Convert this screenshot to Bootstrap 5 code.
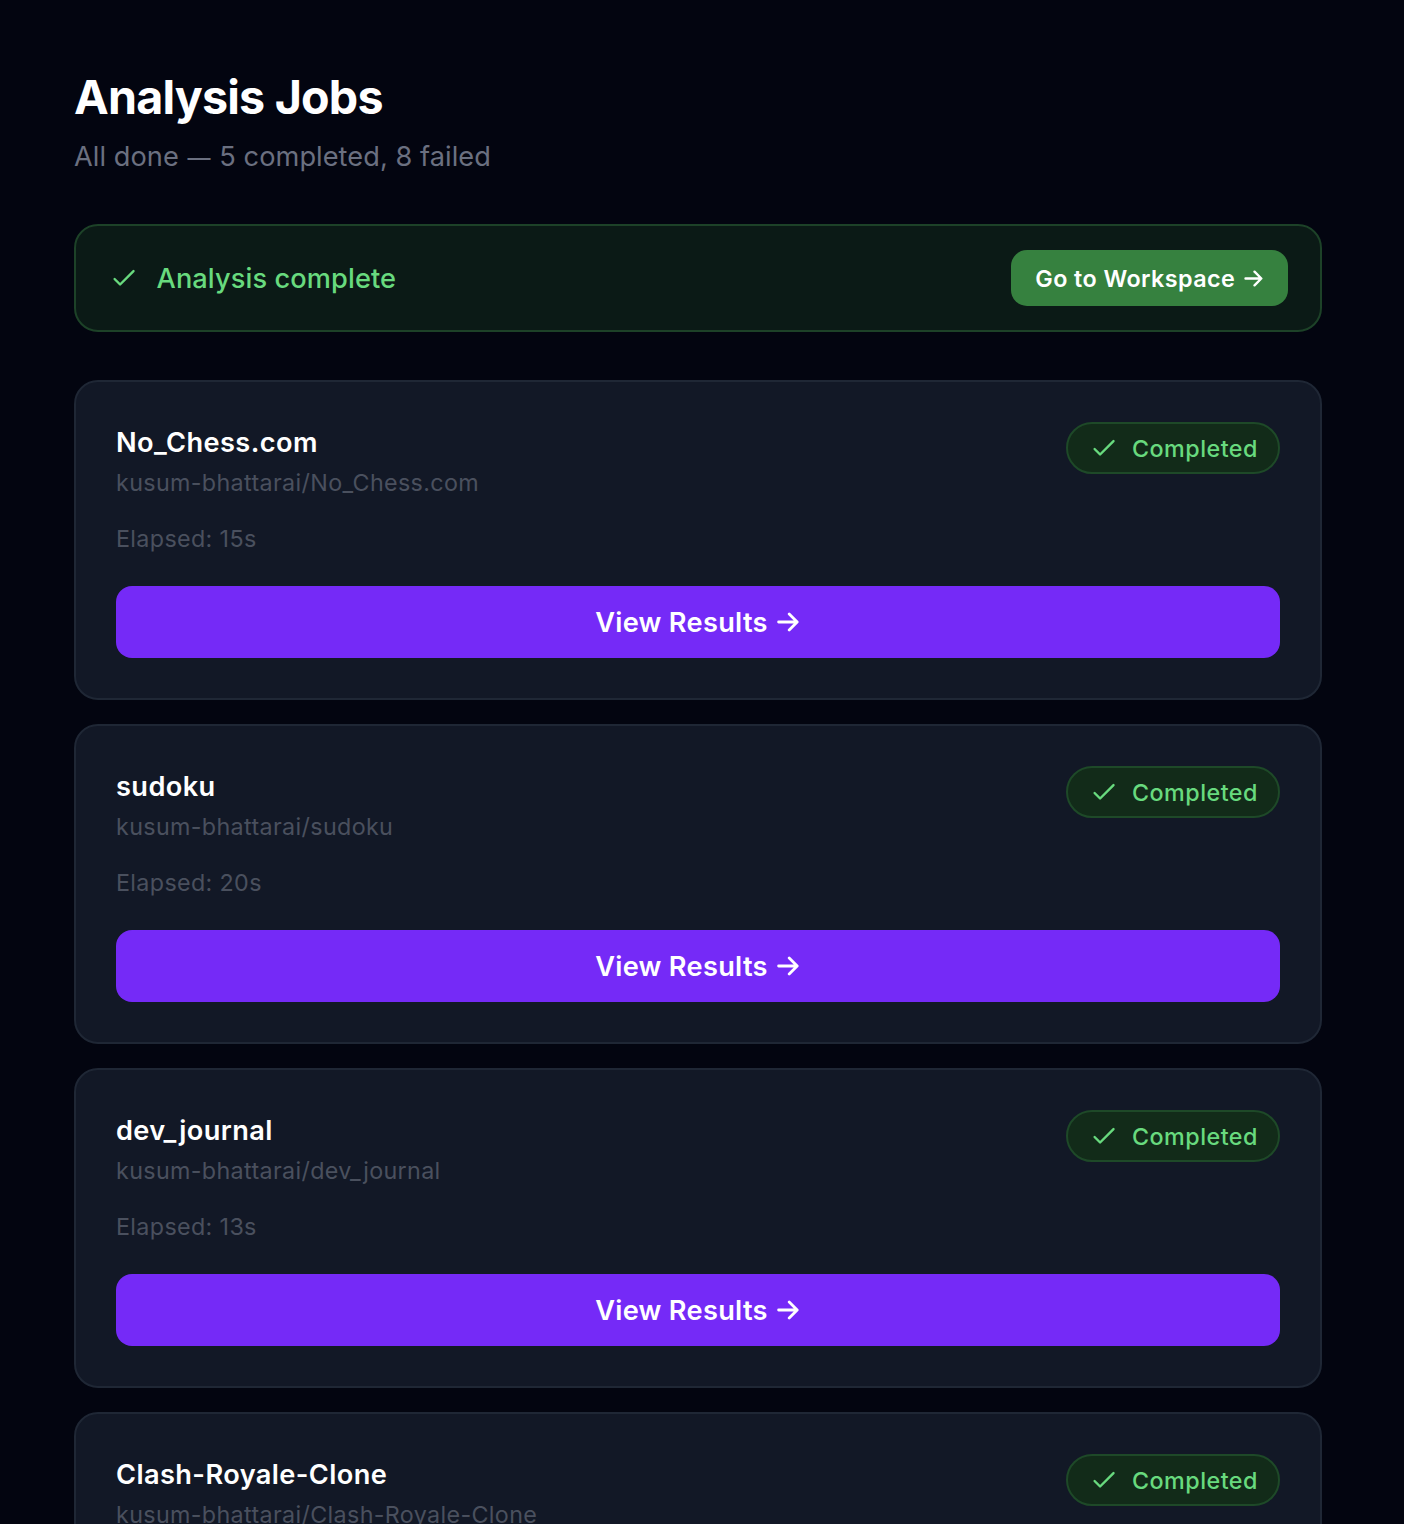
<!DOCTYPE html>
<html lang="en" data-bs-theme="dark">
<head>
<meta charset="utf-8">
<meta name="viewport" content="width=device-width, initial-scale=1">
<title>Analysis Jobs</title>
<link href="https://cdn.jsdelivr.net/npm/bootstrap@5.3.0/dist/css/bootstrap.min.css" rel="stylesheet">
<style>
body{background:#030510;font-family:Inter,"Liberation Sans",sans-serif;color:#fff;height:1524px;overflow:hidden}
.jobs-page{padding:65px 82px 0 74px}
.jobs-title{font-size:46.6px;line-height:64px;font-weight:700;letter-spacing:-.8px}
.jobs-summary{font-size:27.2px;line-height:40px;height:40px;color:#6b7080;letter-spacing:.05px}
.summary-dash{font-size:23px;line-height:1;margin:0 1px}
.done-banner{height:108px;border:2px solid #1d4228;border-radius:24px;background:#0b1a16;padding:0 32px 0 36px;margin:47px 0 48px}
.done-text{font-size:27.2px;line-height:40px;font-weight:500;color:#68da7e;margin-left:20.5px;padding-top:2px;letter-spacing:.1px}
.tick{width:24px;height:24px;flex:none;color:#68da7e}
.btn-workspace{--bs-btn-padding-x:24px;--bs-btn-padding-y:0;--bs-btn-border-width:0;--bs-btn-bg:#36813f;--bs-btn-color:#fff;--bs-btn-font-weight:600;--bs-btn-font-size:23.3px;--bs-btn-border-radius:16px;width:277px;height:56px;letter-spacing:.42px}
.btn-workspace span{padding-top:2px}
.job-card{--bs-card-bg:#121826;--bs-card-border-color:#1f2735;--bs-card-border-width:2px;--bs-card-border-radius:24px;--bs-card-inner-border-radius:22px;--bs-card-spacer-x:40px;--bs-card-spacer-y:40px;height:320px}
.job-name{font-size:27.2px;line-height:40px;font-weight:600;color:#fff;letter-spacing:.4px;padding-top:1px}
.job-repo,.job-time{font-size:23.3px;line-height:32px;color:#4a505e;letter-spacing:.35px}
.job-repo{margin-top:4px}
.job-time{margin:24px 0 31px}
.status-pill{width:214px;height:52px;border:2px solid #1e4928;background:#122b19;color:#68da7e;font-size:23.3px;line-height:32px;font-weight:500;letter-spacing:.48px;padding-left:24px}
.status-pill span{margin-left:16px;padding-top:2px}
.btn-results{--bs-btn-padding-y:0;--bs-btn-border-width:0;--bs-btn-bg:#752af7;--bs-btn-color:#fff;--bs-btn-font-weight:600;--bs-btn-font-size:27.2px;--bs-btn-border-radius:16px;height:72px;letter-spacing:.3px}
.btn-results span{padding-top:2px}
.arrow-lg{width:22px;height:20px;flex:none;margin:0 2px 0 9px}
.arrow-sm{width:19px;height:17px;flex:none;margin:0 1px 0 8.5px}
</style>
<script src="https://cdn.jsdelivr.net/npm/bootstrap@5.3.0/dist/js/bootstrap.bundle.min.js"></script>
</head>
<body>
<svg class="d-none" xmlns="http://www.w3.org/2000/svg">
<symbol id="tick" viewBox="0 0 24 24"><path d="M2.6 13 8.1 18.5 21.5 5.1" fill="none" stroke="currentColor" stroke-width="2.4" stroke-linecap="round" stroke-linejoin="round"/></symbol>
<symbol id="arrow" viewBox="0 0 22 20"><path d="M1.6 10H20M12.2 2 20.2 10 12.2 18" fill="none" stroke="currentColor" stroke-width="2.8" stroke-linecap="round" stroke-linejoin="round"/></symbol>
</svg>
<main class="jobs-page">
<header>
<h1 class="jobs-title mb-2">Analysis Jobs</h1>
<p class="jobs-summary mb-0">All done <span class="summary-dash">—</span> 5 completed, 8 failed</p>
</header>
<section class="done-banner d-flex align-items-center justify-content-between">
<div class="d-flex align-items-center"><svg class="tick"><use href="#tick"/></svg><span class="done-text">Analysis complete</span></div>
<button class="btn btn-workspace d-flex align-items-center justify-content-center text-nowrap"><span>Go to Workspace</span><svg class="arrow-sm"><use href="#arrow"/></svg></button>
</section>
<section class="d-flex flex-column gap-4">
<article class="card job-card"><div class="card-body">
<div class="d-flex justify-content-between align-items-start"><div><h2 class="job-name mb-0">No_Chess.com</h2><div class="job-repo">kusum-bhattarai/No_Chess.com</div></div>
<div class="status-pill rounded-pill d-flex align-items-center"><svg class="tick"><use href="#tick"/></svg><span>Completed</span></div></div>
<p class="job-time">Elapsed: 15s</p>
<button class="btn btn-results w-100 d-flex align-items-center justify-content-center"><span>View Results</span><svg class="arrow-lg"><use href="#arrow"/></svg></button>
</div></article>
<article class="card job-card"><div class="card-body">
<div class="d-flex justify-content-between align-items-start"><div><h2 class="job-name mb-0">sudoku</h2><div class="job-repo">kusum-bhattarai/sudoku</div></div>
<div class="status-pill rounded-pill d-flex align-items-center"><svg class="tick"><use href="#tick"/></svg><span>Completed</span></div></div>
<p class="job-time">Elapsed: 20s</p>
<button class="btn btn-results w-100 d-flex align-items-center justify-content-center"><span>View Results</span><svg class="arrow-lg"><use href="#arrow"/></svg></button>
</div></article>
<article class="card job-card"><div class="card-body">
<div class="d-flex justify-content-between align-items-start"><div><h2 class="job-name mb-0">dev_journal</h2><div class="job-repo">kusum-bhattarai/dev_journal</div></div>
<div class="status-pill rounded-pill d-flex align-items-center"><svg class="tick"><use href="#tick"/></svg><span>Completed</span></div></div>
<p class="job-time">Elapsed: 13s</p>
<button class="btn btn-results w-100 d-flex align-items-center justify-content-center"><span>View Results</span><svg class="arrow-lg"><use href="#arrow"/></svg></button>
</div></article>
<article class="card job-card"><div class="card-body">
<div class="d-flex justify-content-between align-items-start"><div><h2 class="job-name mb-0">Clash-Royale-Clone</h2><div class="job-repo">kusum-bhattarai/Clash-Royale-Clone</div></div>
<div class="status-pill rounded-pill d-flex align-items-center"><svg class="tick"><use href="#tick"/></svg><span>Completed</span></div></div>
</div></article>
</section>
</main>
</body>
</html>
